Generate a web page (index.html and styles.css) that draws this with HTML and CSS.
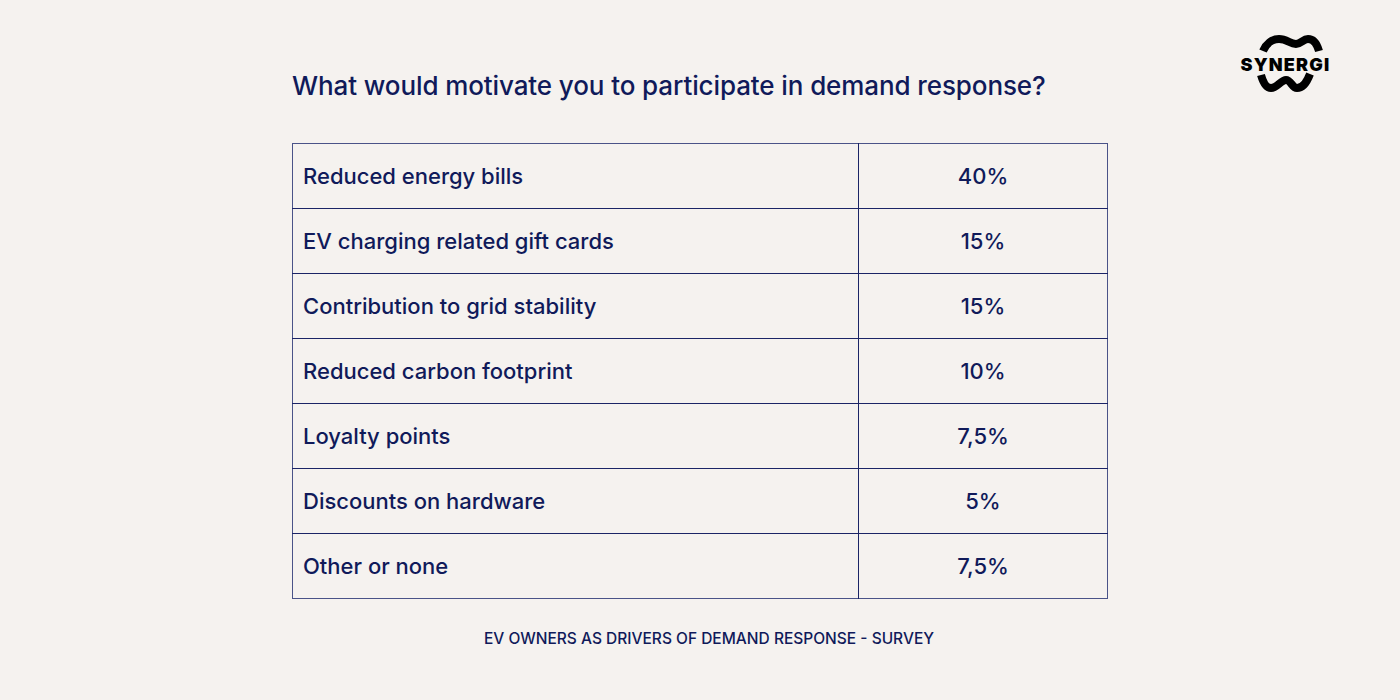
FILE: index.html
```html
<!DOCTYPE html>
<html lang="en">
<head>
<meta charset="utf-8">
<title>Demand response survey</title>
<link rel="stylesheet" href="styles.css">
</head>
<body>
<div class="page">
  <header class="brand">
    <svg class="logo" width="92" height="62" viewBox="0 0 92 62" aria-label="Synergi">
      <path class="wave" d="M24 19 C27 12 33 7 40 7 C48 7 51 12 57 12 C62 12 64 7 69 7 C75 7 78 12 80 19"/>
      <text x="46.5" y="38.5" class="logo-text" text-anchor="middle">SYNERGI</text>
      <path class="wave" d="M22 43 C24 50 27 56 32 56 C38 56 42 48 47 48 C52 48 53 56 58 56 C64 56 68 50 71 42"/>
    </svg>
  </header>
  <main class="content">
    <h1 class="title">What would motivate you to participate in demand response?</h1>
    <table class="survey">
      <tbody>
        <tr><td class="label">Reduced energy bills</td><td class="value">40%</td></tr>
        <tr><td class="label">EV charging related gift cards</td><td class="value">15%</td></tr>
        <tr><td class="label">Contribution to grid stability</td><td class="value">15%</td></tr>
        <tr><td class="label">Reduced carbon footprint</td><td class="value">10%</td></tr>
        <tr><td class="label">Loyalty points</td><td class="value">7,5%</td></tr>
        <tr><td class="label">Discounts on hardware</td><td class="value">5%</td></tr>
        <tr><td class="label">Other or none</td><td class="value">7,5%</td></tr>
      </tbody>
    </table>
    <p class="source">EV OWNERS AS DRIVERS OF DEMAND RESPONSE - SURVEY</p>
  </main>
</div>
</body>
</html>
```
FILE: styles.css
```css
html, body {
  margin: 0;
  padding: 0;
}
body {
  background: #f5f2ef;
  color: #101a5a;
  font-family: Inter, "Noto Sans", "Liberation Sans", sans-serif;
  width: 1400px;
  height: 700px;
  overflow: hidden;
}
.page {
  position: relative;
  width: 1400px;
  height: 700px;
}
.brand {
  position: absolute;
  top: 32px;
  left: 1239px;
}
.logo {
  display: block;
}
.wave {
  fill: none;
  stroke: #000;
  stroke-width: 8;
  stroke-linecap: butt;
}
.logo-text {
  font-family: Inter, "Liberation Sans", sans-serif;
  font-weight: 900;
  font-size: 18px;
  letter-spacing: 1.2px;
  fill: #000;
}
.content {
  width: 816px;
  margin: 0 auto;
  padding-top: 68px;
  display: flex;
  flex-direction: column;
}
.title {
  margin: 0;
  font-size: 26px;
  font-weight: 500;
  line-height: 36px;
  letter-spacing: -0.1px;
}
.survey {
  margin-top: 39px;
  border-collapse: collapse;
  width: 816px;
  border: 1px solid #4a5388;
}
.survey td {
  height: 64px;
  padding: 0;
  border-top: 1px solid #1b2466;
  font-size: 22px;
  font-weight: 500;
}
.survey tr:first-child td {
  border-top: none;
}
.label {
  width: 555px;
  padding-left: 10px !important;
  border-right: 1px solid #1b2466;
}
.value {
  text-align: center;
}
.source {
  margin: 30px 0 0;
  text-align: center;
  padding-left: 18px;
  font-size: 15.5px;
  font-weight: 500;
  letter-spacing: 0;
}
```
